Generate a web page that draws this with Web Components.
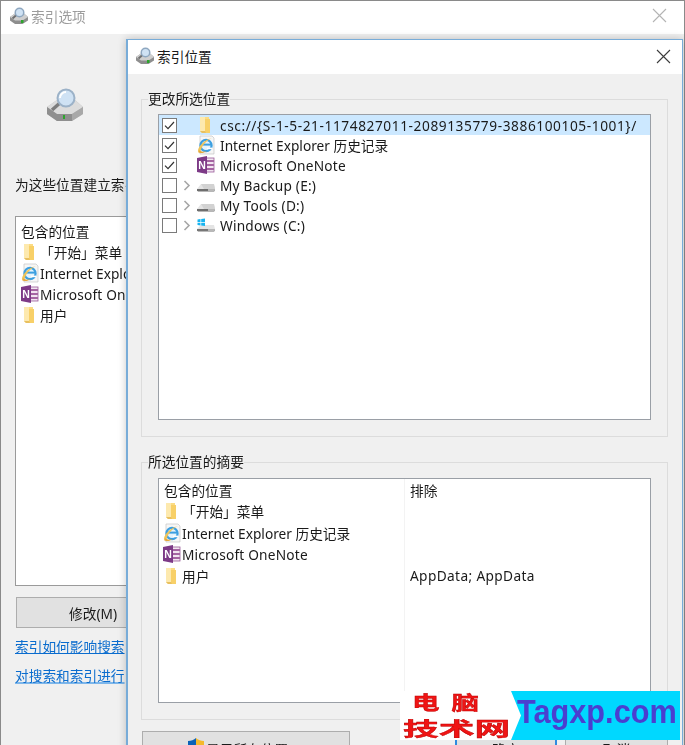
<!DOCTYPE html>
<html lang="zh">
<head>
<meta charset="utf-8">
<title>索引位置</title>
<style>
html, body { margin: 0; height: 745px; overflow: hidden; background: #fff; }
body {
    font: 13.7px "Noto Sans", "Noto Sans CJK SC", sans-serif;
    color: #1a1a1a;
}
[wide] { letter-spacing: .2px; }
[wider] { letter-spacing: .58px; }
</style>
</head>
<body>
<options-window>
    <row-label slot="content" text="为这些位置建立索引"></row-label>
    <plain-list slot="content">
        <plain-row>包含的位置</plain-row>
        <plain-row icon="folder">「开始」菜单</plain-row>
        <plain-row icon="ie">Internet Explorer 历史记录</plain-row>
        <plain-row icon="onenote" wide>Microsoft OneNote</plain-row>
        <plain-row icon="folder">用户</plain-row>
    </plain-list>
</options-window>

<location-dialog>
    <group-box title="更改所选位置" slot="top" inner="306" pad="6">
        <tree-row checked selected icon="folder" wider>csc://{S-1-5-21-1174827011-2089135779-3886100105-1001}/</tree-row>
        <tree-row checked icon="ie">Internet Explorer 历史记录</tree-row>
        <tree-row checked icon="onenote" wide>Microsoft OneNote</tree-row>
        <tree-row expander icon="drive" wide>My Backup (E:)</tree-row>
        <tree-row expander icon="drive" wide>My Tools (D:)</tree-row>
        <tree-row expander icon="windrive" wide>Windows (C:)</tree-row>
    </group-box>
    <group-box title="所选位置的摘要" slot="bottom" inner="225" pad="7">
        <summary-table>
            <summary-row>包含的位置<span slot="exclude">排除</span></summary-row>
            <summary-row icon="folder">「开始」菜单</summary-row>
            <summary-row icon="ie">Internet Explorer 历史记录</summary-row>
            <summary-row icon="onenote" wide>Microsoft OneNote</summary-row>
            <summary-row icon="folder">用户<span slot="exclude" style="letter-spacing:.37px">AppData; AppData</span></summary-row>
        </summary-table>
    </group-box>
</location-dialog>

<site-badge></site-badge>

<script>
const ICONS = {
    folder: `<svg width="20" height="20" viewBox="0 0 20 20">
        <path d="M4 2h9v16H6l-2-2z" fill="#fbdc84"/>
        <path d="M4 2h5v14H4z" fill="#fde9ae"/>
        <path d="M9 4h5v14H9z" fill="#f8d068"/>
        <path d="M4 16h5l1 2H6z" fill="#e8c060"/>
    </svg>`,
    ie: `<svg width="20" height="20" viewBox="0 0 20 20">
        <path d="M4 1h12l2 2v16H4z" fill="#f6f6f6" stroke="#c4c4c4" stroke-width=".7"/>
        <circle cx="10" cy="10.5" r="5.6" fill="#e4f3fc" stroke="#3c9fe0" stroke-width="2.2"/>
        <path d="M5.4 9.6h9.6" stroke="#3c9fe0" stroke-width="2"/>
        <path d="M11 13.4h5" stroke="#fff" stroke-width="1.6"/>
        <path d="M2 17c-1-4 6-13 15-14-5 1-11 7-12 12z" fill="#eec45a"/>
        <path d="M2 17c2 2 6 1 9-1-4 1-6 1-7-1z" fill="#e5a93c"/>
    </svg>`,
    onenote: `<svg width="20" height="20" viewBox="0 0 20 20">
        <rect x="8" y="3" width="10" height="14" fill="#f1e4f0" stroke="#9a5a98" stroke-width=".8"/>
        <path d="M11 6h7M11 10h7M11 14h7" stroke="#a565a2" stroke-width="2"/>
        <path d="M1 3l10-2v18L1 17z" fill="#7d3a87"/>
        <text x="6" y="13.5" text-anchor="middle" font-family="Liberation Sans, sans-serif" font-size="10.5" font-weight="700" fill="#fff">N</text>
    </svg>`,
    drive: `<svg width="20" height="20" viewBox="0 0 20 20">
        <path d="M5 9h13l1 5H1z" fill="#e4e4e4"/>
        <path d="M5 9h13l1 5H8z" fill="#d2d2d2"/>
        <path d="M1 14h18v1.6l-1 1H2l-1-1z" fill="#6e6e6e"/>
        <path d="M12 14h7v1.6l-1 1h-6z" fill="#b8b8b8"/>
    </svg>`,
    windrive: `<svg width="20" height="20" viewBox="0 0 20 20">
        <path d="M5 10h13l1 4H1z" fill="#e4e4e4"/>
        <path d="M1 14h18v1.6l-1 1H2l-1-1z" fill="#777"/>
        <path d="M12 14h7v1.6l-1 1h-6z" fill="#b8b8b8"/>
        <path d="M1.5 4.6l3-.5V7h-3zM5.2 4l3.8-.6V7H5.2zM1.5 7.7h3v2.8l-3-.5zM5.2 7.7H9v3.4l-3.8-.6z" fill="#18b4f0"/>
    </svg>`,
    index: `<svg width="40" height="36" viewBox="0 0 40 36">
        <path d="M2 20l10-7h18l8 7v7l-11 7H12L2 27z" fill="#bdbdbd"/>
        <path d="M2 20l10-7h18l8 7-11 7H12z" fill="#dcdcdc"/>
        <path d="M2 20l10 7h15v7H12L2 27z" fill="#8f8f8f"/>
        <path d="M27 27l11-7v7l-11 7z" fill="#a8a8a8"/>
        <rect x="18" y="28" width="2" height="4" fill="#2da52d"/>
        <path d="M16 15L7 23" stroke="#7c7c7c" stroke-width="3.4"/>
        <circle cx="21" cy="11" r="8.5" fill="#cfe2f4" stroke="#9cb2c8" stroke-width="2"/>
        <path d="M15 11a6 6 0 0 1 6-6" stroke="#fff" stroke-width="2" fill="none"/>
    </svg>`,
    small: `<svg width="20" height="18" viewBox="0 0 40 36">
        <path d="M2 20l10-7h18l8 7v7l-11 7H12L2 27z" fill="#8e8e8e"/>
        <path d="M2 20l10-7h18l8 7-11 7H12z" fill="#cfcfcf"/>
        <rect x="24" y="26" width="5" height="6" fill="#2da52d"/>
        <path d="M16 15L7 23" stroke="#707070" stroke-width="4"/>
        <circle cx="21" cy="11" r="8.5" fill="#cfe2f4" stroke="#8ea7c0" stroke-width="3"/>
    </svg>`,
    shield: `<svg width="16" height="18" viewBox="0 0 16 18">
        <path d="M8 0C6 2 3 3 0 3v6c0 4 3 7 8 9z" fill="#0a62b8"/>
        <path d="M8 0c2 2 5 3 8 3v6c0 4-3 7-8 9z" fill="#f5b92c"/>
    </svg>`
};

class AppIcon extends HTMLElement {
    connectedCallback() {
        this.attachShadow({ mode: 'open' });
        this.shadowRoot.innerHTML = `
            <style>
                :host { display: inline-flex; flex: none; letter-spacing: 0; }
                svg { display: block; }
            </style>
            ${ICONS[this.getAttribute('name')] || ''}
        `;
    }
}
customElements.define('app-icon', AppIcon);

class CloseButton extends HTMLElement {
    connectedCallback() {
        this.attachShadow({ mode: 'open' });
        this.shadowRoot.innerHTML = `
            <style>:host { display: block; flex: none; } svg { display: block; }</style>
            <svg width="15" height="15" viewBox="0 0 15 15">
                <path d="M1 1l13 13M14 1L1 14" stroke="${this.getAttribute('color') || '#444'}" stroke-width="1.1" fill="none"/>
            </svg>
        `;
    }
}
customElements.define('close-button', CloseButton);

class OptionsWindow extends HTMLElement {
    constructor() {
        super();
        this.attachShadow({ mode: 'open' });
        this.shadowRoot.innerHTML = `
            <style>
                :host {
                    display: flex;
                    flex-direction: column;
                    height: 745px;
                    box-sizing: border-box;
                    border: solid #8a8a8a;
                    border-width: 1px 1px 0 1px;
                    background: #f0f0f0;
                    overflow: hidden;
                    filter: blur(.35px);
                }
                .title {
                    height: 29px;
                    flex: none;
                    display: flex;
                    align-items: center;
                    gap: 2px;
                    padding: 0 17px 4px 8px;
                    background: #fff;
                    color: #9c9c9c;
                    font-size: 13.7px;
                }
                .title span { flex: 1; }
                .hero { padding: 53px 0 0 44px; height: 87px; flex: none; }
                .column {
                    width: 340px;
                    padding-left: 14px;
                    display: flex;
                    flex-direction: column;
                }
                button {
                    margin: 11px 0 0 1px;
                    width: 339px;
                    height: 31px;
                    box-sizing: border-box;
                    font: inherit;
                    color: inherit;
                    text-align: left;
                    padding-left: 52px;
                    background: #e1e1e1;
                    border: 1px solid #adadad;
                }
                .links { display: flex; flex-direction: column; gap: 10px; margin-top: 9px; }
                a { color: #0a6cce; text-decoration: underline; line-height: 19px; white-space: nowrap; }
                a.focus { text-decoration-color: #7db6ea; text-decoration-thickness: 2px; }
            </style>
            <div class="title">
                <app-icon name="small"></app-icon>
                <span>索引选项</span>
                <close-button color="#b4b4b4"></close-button>
            </div>
            <div class="hero"><app-icon name="index"></app-icon></div>
            <div class="column">
                <slot name="content"></slot>
                <button>修改(M)</button>
                <div class="links">
                    <a href="#">索引如何影响搜索</a>
                    <a class="focus" href="#">对搜索和索引进行</a>
                </div>
            </div>
        `;
    }
}
customElements.define('options-window', OptionsWindow);

class RowLabel extends HTMLElement {
    connectedCallback() {
        this.attachShadow({ mode: 'open' });
        this.shadowRoot.innerHTML = `
            <style>:host { display: block; height: 41px; margin-top: 1px; line-height: 20px; white-space: nowrap; }</style>
            ${this.getAttribute('text')}
        `;
    }
}
customElements.define('row-label', RowLabel);

class PlainList extends HTMLElement {
    constructor() {
        super();
        this.attachShadow({ mode: 'open' });
        this.shadowRoot.innerHTML = `
            <style>
                :host {
                    display: block;
                    height: 370px;
                    box-sizing: border-box;
                    background: #fff;
                    border: 1px solid #9a9a9a;
                    padding: 3px 0 0 2px;
                    overflow: hidden;
                }
            </style>
            <slot></slot>
        `;
    }
}
customElements.define('plain-list', PlainList);

// one line of a list: optional icon, then the label
class PlainRow extends HTMLElement {
    constructor() {
        super();
        this.attachShadow({ mode: 'open' });
    }
    connectedCallback() {
        const icon = this.getAttribute('icon');
        this.shadowRoot.innerHTML = `
            <style>
                :host {
                    display: flex;
                    align-items: center;
                    height: 21.2px;
                    white-space: nowrap;
                    padding-left: 3px;
                }
                app-icon { margin-left: -1px; }
            </style>
            ${icon ? `<app-icon name="${icon}"></app-icon>` : ''}
            <span><slot></slot></span>
        `;
    }
}
customElements.define('plain-row', PlainRow);

class LocationDialog extends HTMLElement {
    constructor() {
        super();
        this.attachShadow({ mode: 'open' });
        this.shadowRoot.innerHTML = `
            <style>
                :host {
                    position: absolute;
                    left: 126px;
                    top: 39px;
                    width: 557px;
                    height: 720px;
                    box-sizing: border-box;
                    display: flex;
                    flex-direction: column;
                    background: #f0f0f0;
                    border: solid #78acd8;
                    border-width: 1px 1px 1px 2px;
                    box-shadow: 0 0 8px rgba(0,0,0,.22);
                    filter: blur(.35px);
                }
                .title {
                    height: 32px;
                    flex: none;
                    display: flex;
                    align-items: center;
                    gap: 2px;
                    padding: 0 11px 2px 7px;
                    background: #fff;
                }
                .title span { flex: 1; }
                .groups {
                    padding: 16px 14px 0 13px;
                    display: flex;
                    flex-direction: column;
                    gap: 16px;
                }
                .actions {
                    margin-top: 11px;
                    padding: 0 13px 0 14px;
                    display: flex;
                    gap: 8px;
                }
                button {
                    height: 36px;
                    flex: none;
                    box-sizing: border-box;
                    font: inherit;
                    color: inherit;
                    background: #e1e1e1;
                    border: 1px solid #adadad;
                    padding: 0;
                    display: flex;
                    align-items: center;
                    justify-content: center;
                    gap: 2px;
                }
                .all { width: 208px; margin-right: 97px; }
                .all app-icon { margin-top: -5px; }
                .ok { width: 102px; border: 2px solid #2f8be0; }
                .cancel { width: 103px; }
            </style>
            <div class="title">
                <app-icon name="small"></app-icon>
                <span>索引位置</span>
                <close-button color="#3c3c3c"></close-button>
            </div>
            <div class="groups">
                <slot name="top"></slot>
                <slot name="bottom"></slot>
            </div>
            <div class="actions">
                <button class="all"><app-icon name="shield"></app-icon>显示所有位置(S)</button>
                <button class="ok">确定</button>
                <button class="cancel">取消</button>
            </div>
        `;
    }
}
customElements.define('location-dialog', LocationDialog);

class GroupBox extends HTMLElement {
    constructor() {
        super();
        this.attachShadow({ mode: 'open' });
    }
    connectedCallback() {
        this.shadowRoot.innerHTML = `
            <style>
                :host { display: block; }
                fieldset {
                    margin: 0;
                    padding: ${this.getAttribute('pad')}px 16px 16px;
                    border: 1px solid #dcdcdc;
                }
                legend {
                    padding: 0;
                    margin-left: -10px;
                    line-height: 18px;
                    background: #f0f0f0;
                    white-space: nowrap;
                }
                .box {
                    height: ${this.getAttribute('inner')}px;
                    box-sizing: border-box;
                    background: #fff;
                    border: 1px solid #9a9fa6;
                    overflow: hidden;
                }
            </style>
            <fieldset>
                <legend>${this.getAttribute('title')}</legend>
                <div class="box"><slot></slot></div>
            </fieldset>
        `;
    }
}
customElements.define('group-box', GroupBox);

class TreeRow extends HTMLElement {
    constructor() {
        super();
        this.attachShadow({ mode: 'open' });
    }
    connectedCallback() {
        const checked = this.hasAttribute('checked');
        const expander = this.hasAttribute('expander');
        this.shadowRoot.innerHTML = `
            <style>
                :host {
                    display: flex;
                    align-items: center;
                    height: 20px;
                    white-space: nowrap;
                    background: ${this.hasAttribute('selected') ? '#cce8ff' : 'transparent'};
                }
                .check { margin-left: 3px; flex: none; display: block; }
                .chevron { margin-left: 6px; flex: none; display: block; visibility: ${expander ? 'visible' : 'hidden'}; }
                app-icon { margin-left: 5px; }
                .label { margin-left: 4px; }
            </style>
            <svg class="check" width="15" height="15" viewBox="0 0 15 15">
                <rect x=".5" y=".5" width="14" height="14" fill="#fff" stroke="#7a7a7a"/>
                ${checked ? '<path d="M3 7.6l3 3L12 4" fill="none" stroke="#333" stroke-width="1.2"/>' : ''}
            </svg>
            <svg class="chevron" width="8" height="11" viewBox="0 0 8 11">
                <path d="M1.5 1l4.5 4.5L1.5 10" fill="none" stroke="#a6a6a6" stroke-width="1.6"/>
            </svg>
            <app-icon name="${this.getAttribute('icon')}"></app-icon>
            <span class="label"><slot></slot></span>
        `;
    }
}
customElements.define('tree-row', TreeRow);

class SummaryTable extends HTMLElement {
    constructor() {
        super();
        this.attachShadow({ mode: 'open' });
        this.shadowRoot.innerHTML = `
            <style>
                :host { display: block; height: 100%; }
                .rows { background: linear-gradient(90deg, transparent 245px, #f3f3f3 245px, #f3f3f3 246px, transparent 246px); height: 100%; box-sizing: border-box; }
            </style>
            <div class="rows"><slot></slot></div>
        `;
    }
}
customElements.define('summary-table', SummaryTable);

class SummaryRow extends HTMLElement {
    constructor() {
        super();
        this.attachShadow({ mode: 'open' });
    }
    connectedCallback() {
        const icon = this.getAttribute('icon');
        this.shadowRoot.innerHTML = `
            <style>
                :host {
                    display: grid;
                    grid-template-columns: 251px 1fr;
                    align-items: center;
                    height: 21.5px;
                    white-space: nowrap;
                }
                .first { display: flex; align-items: center; padding-left: 5px; }
                app-icon { margin-left: -2px; }
            </style>
            <div class="first">
                ${icon ? `<app-icon name="${icon}"></app-icon>` : ''}
                <span><slot></slot></span>
            </div>
            <div><slot name="exclude"></slot></div>
        `;
    }
}
customElements.define('summary-row', SummaryRow);

// watermark stuck over the bottom right corner of the shot
class SiteBadge extends HTMLElement {
    constructor() {
        super();
        this.attachShadow({ mode: 'open' });
        this.shadowRoot.innerHTML = `
            <style>
                :host {
                    position: absolute;
                    left: 400px;
                    top: 691px;
                    width: 280px;
                    height: 49px;
                    display: flex;
                    background: #fff;
                    overflow: hidden;
                    filter: blur(.35px);
                }
                .cn {
                    width: 111px;
                    flex: none;
                    color: #f01414;
                    font: 700 19px/24px "Noto Sans CJK SC", sans-serif;
                    -webkit-text-stroke: .4px #b00;
                }
                .cn div { transform-origin: 0 0; white-space: nowrap; }
                .l1 { transform: translate(12px, -1px) scaleX(1.45); letter-spacing: 2px; }
                .l2 { transform: translate(3px, 0) scaleX(1.88); margin-top: 1px; }
                .en {
                    flex: 1;
                    background: #00d8ff;
                    clip-path: polygon(0 0, 100% 0, 100% 100%, 0 100%, 10px 50%);
                    color: #4a3fd0;
                    font: 700 33px/42px "Liberation Sans", sans-serif;
                    white-space: nowrap;
                    padding-left: 6px;
                }
                .en span { display: inline-block; transform: scaleX(.93); transform-origin: 0 0; }
            </style>
            <div class="cn"><div class="l1">电 脑</div><div class="l2">技术网</div></div>
            <div class="en"><span>Tagxp.com</span></div>
        `;
    }
}
customElements.define('site-badge', SiteBadge);
</script>
</body>
</html>
